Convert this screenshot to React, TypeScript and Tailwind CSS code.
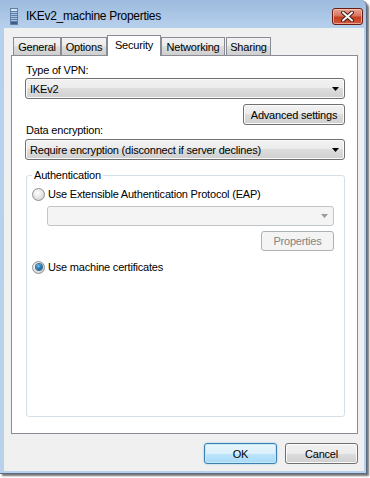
import React from 'react';

function Arrow({ disabled = false }: { disabled?: boolean }) {
  return (
    <svg width="7" height="4" viewBox="0 0 7 4">
      <polygon points="0,0 7,0 3.5,4" fill={disabled ? '#9a9a9a' : '#000'} />
    </svg>
  );
}

function Combo({ text, disabled = false, className = '' }: { text?: string; disabled?: boolean; className?: string }) {
  const look = disabled
    ? 'border-[#bfc4c8] bg-[#f4f4f4] text-[#838383]'
    : 'border-[#707070] bg-[linear-gradient(#f2f2f2_0%,#ebebeb_50%,#dddddd_50%,#cfcfcf_100%)] shadow-[inset_0_0_0_1px_#fbfbfb]';
  return (
    <div className={`flex items-center rounded-[3px] border pl-[4px] pr-[5px] ${look} ${className}`}>
      <span className="flex-1 leading-[14px]">{text}</span>
      <Arrow disabled={disabled} />
    </div>
  );
}

function Button({ children, disabled = false, primary = false, className = '' }: { children: React.ReactNode; disabled?: boolean; primary?: boolean; className?: string }) {
  let look = 'border-[#707070] bg-[linear-gradient(#f2f2f2_0%,#ebebeb_50%,#dddddd_50%,#cfcfcf_100%)] shadow-[inset_0_0_0_1px_#fbfbfb]';
  if (disabled) look = 'border-[#adb2b5] bg-[#f4f4f4] text-[#838383]';
  if (primary) look = 'border-[#3c7fb1] bg-[linear-gradient(#eaf6fd_0%,#d9f0fc_50%,#bee6fd_50%,#a7d9f5_100%)] shadow-[inset_0_0_0_1px_#c6e7f8,0_0_2px_#7ec4ec]';
  return (
    <div className={`flex items-center justify-center rounded-[3px] border leading-[14px] ${look} ${className}`}>
      {children}
    </div>
  );
}

function Radio({ checked = false }: { checked?: boolean }) {
  return (
    <div className="flex h-[13px] w-[13px] items-center justify-center rounded-full border border-[#8e8f8f] bg-[radial-gradient(circle_at_40%_35%,#ffffff_0%,#e8e8e8_45%,#c8c8c8_100%)]">
      {checked && (
        <div className="h-[6px] w-[6px] rounded-full bg-[radial-gradient(circle_at_40%_35%,#7fc6f0_0%,#1f74b0_50%,#0d3f6e_100%)] shadow-[0_0_0_1px_#3a6f96]" />
      )}
    </div>
  );
}

function Tab({ label, w, selected = false, className = '' }: { label: string; w: string; selected?: boolean; className?: string }) {
  if (selected) {
    return (
      <div className={`relative z-10 -mb-px flex h-[21px] items-start justify-center border border-b-0 border-[#898c95] bg-white pt-[2px] leading-[14px] ${w} ${className}`}>
        {label}
      </div>
    );
  }
  return (
    <div className={`flex h-[18px] items-center justify-center border border-b-0 border-[#898c95] bg-[linear-gradient(#f2f2f2_0%,#ebebeb_50%,#dddddd_50%,#cfcfcf_100%)] pt-[1px] leading-[14px] ${w} ${className}`}>
      {label}
    </div>
  );
}

export default function App() {
  return (
    <div className="h-[478px] w-[370px] bg-white font-['Liberation_Sans',Arial,sans-serif] text-[11px] tracking-[-0.2px] text-black">
      <div className="h-[474px] w-[367px] rounded-tr-[6px] border-r border-b border-[#5b6b80] bg-[linear-gradient(#9dbbde_0px,#b7d0ec_28px,#b9d1ea_100%)] shadow-[2px_2px_2px_rgba(0,0,0,0.55)]">
        {/* title bar */}
        <div className="flex h-[28px] items-start">
          <svg className="ml-[10px] mt-[8px]" width="8" height="17" viewBox="0 0 8 17">
            <rect x="0" y="0" width="8" height="17" fill="#5f7fa6" />
            <rect x="1" y="1" width="6" height="2" fill="#d8e6f4" />
            <rect x="1" y="4" width="6" height="1" fill="#aac3de" />
            <rect x="1" y="6" width="6" height="1" fill="#aac3de" />
            <rect x="1" y="8" width="6" height="1" fill="#aac3de" />
            <rect x="1" y="10" width="6" height="1" fill="#aac3de" />
            <rect x="1" y="12" width="6" height="1" fill="#aac3de" />
            <rect x="1" y="14" width="6" height="2" fill="#3d5d86" />
          </svg>
          <span className="ml-[8px] mt-[8px] text-[12px] leading-[16px] tracking-[-0.3px]">IKEv2_machine Properties</span>
          <div className="ml-auto mr-[3px] mt-[8px] flex h-[17px] w-[31px] items-center justify-center rounded-[3px] border border-[#6b1d14] bg-[linear-gradient(#e7a593_0%,#d8745e_45%,#c2401f_55%,#d2583c_100%)] shadow-[inset_0_0_0_1px_rgba(255,210,200,0.6)]">
            <svg width="13" height="11" viewBox="0 0 13 11">
              <path d="M2 1.5 L11 9.5 M11 1.5 L2 9.5" stroke="#4a1a14" strokeWidth="4" strokeLinecap="round" />
              <path d="M2 1.5 L11 9.5 M11 1.5 L2 9.5" stroke="#f4f4f4" strokeWidth="2" strokeLinecap="round" />
            </svg>
          </div>
        </div>

        {/* client area */}
        <div className="ml-[4px] flex h-[443px] w-[360px] flex-col bg-[#f0f0f0]">
          <div className="ml-[7px] mt-[7px] flex items-end pl-[2px]">
            <Tab label="General" w="w-[48px]" />
            <Tab label="Options" w="w-[46px]" />
            <Tab label="Security" w="w-[54px]" selected />
            <Tab label="Networking" w="w-[64px]" />
            <Tab label="Sharing" w="w-[45px]" className="ml-[1px]" />
          </div>

          <div className="ml-[7px] flex h-[379px] w-[347px] flex-col border border-[#898c95] bg-white pl-[13px]">
            <div className="flex w-[320px] flex-col">
              <div className="mt-[7px] h-[14px] pl-[1px] leading-[14px]">Type of VPN:</div>
              <Combo text="IKEv2" className="mt-[1px] h-[21px]" />
              <Button className="mt-[5px] h-[21px] w-[102px] self-end">Advanced settings</Button>
              <div className="mt-[-2px] h-[14px] pl-[1px] leading-[14px]">Data encryption:</div>
              <Combo text="Require encryption (disconnect if server declines)" className="mt-[2px] h-[21px]" />

              <fieldset className="ml-[1px] mt-[8px] h-[249px] w-[319px] rounded-[3px] border border-[#d5dfe5]">
                <legend className="ml-[5px] px-[2px] leading-[14px]">Authentication</legend>
                <div className="mt-[5px] flex h-[14px] items-center pl-[5px]">
                  <Radio />
                  <span className="ml-[3px] leading-[14px]">Use Extensible Authentication Protocol (EAP)</span>
                </div>
                <div className="ml-[20px] flex w-[287px] flex-col">
                  <Combo disabled className="mt-[5px] h-[20px]" />
                  <Button disabled className="mt-[5px] h-[20px] w-[73px] self-end">Properties</Button>
                </div>
                <div className="mt-[9px] flex h-[14px] items-center pl-[5px]">
                  <Radio checked />
                  <span className="ml-[3px] leading-[14px]">Use machine certificates</span>
                </div>
              </fieldset>
            </div>
          </div>

          <div className="mt-[9px] flex justify-end gap-[8px] pr-[6px]">
            <Button primary className="h-[21px] w-[73px]">OK</Button>
            <Button className="h-[21px] w-[73px]">Cancel</Button>
          </div>
        </div>
      </div>
    </div>
  );
}
